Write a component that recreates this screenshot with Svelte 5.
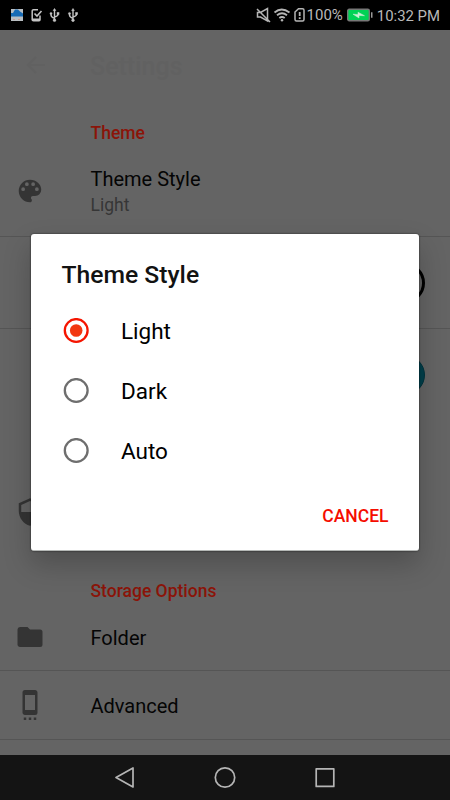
<script lang="ts">
  let options: string[] = ['Light', 'Dark', 'Auto'];
  let selected: string = $state('Light');
</script>

<div class="screen">
  <header class="status">
    <svg class="notifications" width="72" height="16" viewBox="0 0 72 16">
      <rect x="0" y="2" width="12" height="12" fill="#b9bec2" />
      <path d="M0 9.500V6h2l2-3.500h3l2 2 3 2v3z" fill="#176bb5" />
      <path d="M2 12.500h2m3 0h2" stroke="#c99a8d" />
      <path d="M27 2.700h-4.500q-1.300 0-1.300 1v9q0 1 1.300 1h5.500q1 0 1-1V8.500" fill="none" stroke="#c4c4c4" stroke-width="1.500" />
      <path d="M21 12.500h8" stroke="#c4c4c4" stroke-width="2" />
      <path d="m23.500 6.500 2.500 2.500 4.500-5" fill="none" stroke="#c4c4c4" stroke-width="1.600" />
      {#each [43.5, 62] as x}
        <g transform="translate({x} 0)" fill="#c4c4c4" stroke="#c4c4c4">
          <path d="M0 3v10M-3.500 6v2q0 2 3.500 3.300M3.500 6v1.500q0 1.500-3.500 2.500" fill="none" stroke-width="1.400" />
          <path d="m0 1.500 1.300 2h-2.600z" stroke-width=".6" />
          <circle cx="0" cy="13.300" r="1.300" stroke-width=".6" />
          <circle cx="-3.500" cy="6.500" r="1.100" stroke-width=".4" />
          <path d="M2.300 5.200h2.500v2.500H2.300z" stroke="none" />
        </g>
      {/each}
    </svg>
    <div class="indicators">
      <svg width="50" height="16" viewBox="0 0 50 16" fill="none" stroke="#b5b5b5" stroke-width="1.500">
        <path d="M1.500 5.500h3L11.500 1.500v12.500l-7-4h-3zM1 2l13 13" />
        <path d="M18.500 5.500q7-6 15 0M21 8.300q5-4 10 0M23.300 11q2.700-2 5.400 0" stroke-width="1.800" />
        <circle cx="26" cy="13.300" r="1.200" fill="#b5b5b5" stroke="none" />
        <path d="M42.500 1.700h4q1.500 0 1.500 1.500v9.300q0 1.500-1.500 1.500h-6q-1.500 0-1.500-1.500V5z" />
        <path d="M43.700 5v4M43.700 10.300v1.700" stroke-width="1.800" />
      </svg>
      <span class="percent">100%</span>
      <svg class="battery" width="26" height="14" viewBox="0 0 26 14">
        <rect x=".7" y="1.200" width="21.600" height="11.600" rx="1.500" fill="#00d355" stroke="#777" stroke-width="1.400" />
        <path d="M24 4.200h1.500v5.600H24z" fill="#999" />
        <path d="m6 6.200 5 .3V4.200l6.500 3.500-5.500-.2v2.500z" fill="#c8eed4" stroke="#c8eed4" stroke-width=".5" />
      </svg>
      <span class="clock">10:32 PM</span>
    </div>
  </header>

  <main class="settings">
    <div class="toolbar">
      <svg class="back" width="20" height="18" viewBox="0 0 20 18">
        <path d="M19 9H2m8-8L2 9l8 8" fill="none" stroke="#616161" stroke-width="2" />
      </svg>
      <h1>Settings</h1>
    </div>
    <h2 class="theme-heading">Theme</h2>
    <div class="row theme-row">
      <svg class="icon" width="30" height="30" viewBox="0 0 24 24">
        <path d="M12 3a9 9 0 0 0 0 18c.83 0 1.500-.67 1.500-1.500 0-.39-.15-.74-.39-1.010-.23-.26-.38-.61-.38-.99 0-.83.67-1.500 1.500-1.500H16a5 5 0 0 0 5-5c0-4.420-4.030-8-9-8zm-5.500 9a1.500 1.500 0 1 1 0-3 1.500 1.500 0 0 1 0 3zm3-4a1.500 1.500 0 1 1 0-3 1.500 1.500 0 0 1 0 3zm5 0a1.500 1.500 0 1 1 0-3 1.500 1.500 0 0 1 0 3zm3 4a1.500 1.500 0 1 1 0-3 1.500 1.500 0 0 1 0 3z" />
      </svg>
      <div class="label">
        <div>Theme Style</div>
        <small>Light</small>
      </div>
    </div>
    <div class="row color-row"><span class="swatch outline"></span></div>
    <div class="row color-row plain"><span class="swatch accent"></span></div>
    <div class="row shield-row">
      <svg class="icon" width="30" height="30" viewBox="0 0 24 24">
        <path d="M12 1 3 5v6c0 5.550 3.840 10.740 9 12 5.160-1.260 9-6.450 9-12V5l-9-4zm0 2.200 7 3.100V12H5V6.300l7-3.100z" />
      </svg>
    </div>
    <h2 class="storage-heading">Storage Options</h2>
    <div class="row folder-row">
      <svg class="icon" width="30" height="30" viewBox="0 0 24 24">
        <path d="M10 4H4a2 2 0 0 0-1.990 2L2 18c0 1.100.9 2 2 2h16a2 2 0 0 0 2-2V8a2 2 0 0 0-2-2h-8l-2-2z" />
      </svg>
      <div class="label">Folder</div>
    </div>
    <div class="row advanced-row">
      <svg class="icon" width="30" height="30" viewBox="0 0 24 24">
        <path d="M7 22h2v2H7zM11 22h2v2h-2zM15 22h2v2h-2zM16 .01 8 0a2 2 0 0 0-2 2v16c0 1.100.9 2 2 2h8a2 2 0 0 0 2-2V2c0-1.100-.9-1.990-2-1.990zM16 16H8V4h8v12z" />
      </svg>
      <div class="label">Advanced</div>
    </div>
  </main>

  <nav>
    <svg width="22" height="24" viewBox="0 0 22 24"><path d="M19 2v19L2 11.500z" /></svg>
    <svg width="22" height="24" viewBox="0 0 22 24"><circle cx="11" cy="11.500" r="9.700" /></svg>
    <svg width="22" height="24" viewBox="0 0 22 24"><path d="M2.200 2.800h17.600v17.600H2.200z" /></svg>
  </nav>

  <div class="dialog" role="dialog" aria-label="Theme Style">
    <h3>Theme Style</h3>
    {#each options as option}
      <button class="option" onclick={() => (selected = option)}>
        <svg class="radio" class:checked={selected === option} width="26" height="26" viewBox="0 0 26 26">
          <circle class="ring" cx="13.200" cy="12.500" r="11.400" />
          {#if selected === option}
            <circle class="dot" cx="13.200" cy="12.500" r="6.300" />
          {/if}
        </svg>
        {option}
      </button>
    {/each}
    <button class="cancel">CANCEL</button>
  </div>
</div>

<style>
  :global(body) {
    margin: 0;
  }

  .screen {
    position: relative;
    display: flex;
    flex-direction: column;
    width: 450px;
    height: 800px;
    overflow: hidden;
    background: #646464;
    font-family: Roboto, "Liberation Sans", sans-serif;
  }

  .status {
    display: flex;
    justify-content: space-between;
    box-sizing: border-box;
    height: 30px;
    padding: 7px 10px 0 11px;
    background: #000;
    color: #b9b9b9;
  }

  .indicators {
    display: flex;
    align-items: flex-start;
  }

  .percent {
    margin-left: 1px;
    font-size: 15px;
    line-height: 16px;
  }

  .battery {
    margin: 1px 0 0 4px;
  }

  .clock {
    margin-left: 4px;
    font-size: 14.9px;
    line-height: 18px;
  }

  .settings {
    flex: 1;
  }

  .toolbar {
    display: flex;
    align-items: center;
    height: 73px;
    padding-left: 26px;
  }

  .back {
    margin-top: -3px;
  }

  h1 {
    margin: 0 0 0 44px;
    color: #616161;
    font-size: 25px;
    font-weight: 500;
  }

  h2 {
    margin: 0;
    padding-left: 90.5px;
    color: #8b1409;
    font-size: 17.5px;
    font-weight: 500;
  }

  .theme-heading {
    height: 41px;
    line-height: 60px;
  }

  .storage-heading {
    height: 59px;
    line-height: 78px;
  }

  .row {
    display: flex;
    align-items: center;
    box-sizing: border-box;
    padding: 0 25px 0 15px;
    border-bottom: 1px solid #555;
    color: #050505;
    font-size: 20px;
  }

  .icon {
    flex: none;
    fill: #343434;
  }

  .label {
    margin: 2px 0 0 45.5px;
    line-height: 26px;
  }

  small {
    display: block;
    color: #363636;
    font-size: 17.5px;
  }

  .theme-row {
    height: 93px;
    padding-top: 1px;
  }

  .theme-row .label {
    margin-top: 2px;
  }

  .color-row {
    justify-content: flex-end;
    height: 92px;
  }

  .plain, .shield-row {
    border-bottom: none;
  }

  .swatch {
    box-sizing: border-box;
    width: 40px;
    height: 40px;
    border-radius: 50%;
  }

  .outline {
    border: 3px solid #000;
  }

  .accent {
    background: #003f4b;
    border: 1px solid #00333d;
  }

  .shield-row {
    height: 131px;
    padding-top: 50px;
  }

  .folder-row {
    height: 60px;
    padding-bottom: 7px;
  }

  .advanced-row {
    height: 69px;
  }

  nav {
    display: flex;
    justify-content: space-between;
    align-items: center;
    height: 45px;
    padding: 0 114px;
    background: #141414;
  }

  nav svg {
    fill: none;
    stroke: #b5b5b5;
    stroke-width: 1.7;
    stroke-linejoin: round;
  }

  .dialog {
    position: absolute;
    top: 234px;
    left: 31px;
    display: flex;
    flex-direction: column;
    box-sizing: border-box;
    width: 388px;
    height: 317px;
    border-bottom: 1px solid #b5b8b6;
    border-radius: 3px;
    background: #fff;
    box-shadow: 0 0 2px rgba(0, 0, 0, 0.7), 0 13px 28px rgba(0, 0, 0, 0.22);
  }

  h3 {
    height: 66px;
    margin: 0 0 0 30.5px;
    color: #121212;
    font-size: 24.7px;
    font-weight: 500;
    line-height: 82px;
  }

  button {
    border: none;
    background: none;
    font-family: inherit;
    cursor: pointer;
  }

  .option {
    display: flex;
    align-items: center;
    height: 60px;
    padding: 2px 0 0 32px;
    color: #000;
    font-size: 22.5px;
  }

  .radio {
    margin: -1px 32px 0 0;
  }

  .ring {
    fill: none;
    stroke: #6e6e6e;
    stroke-width: 2.3;
  }

  .checked .ring {
    stroke: #f51500;
  }

  .dot {
    fill: #f23710;
  }

  .cancel {
    align-self: flex-end;
    height: 40px;
    margin: 16px 30.5px 0 0;
    padding: 0;
    color: #f50d00;
    font-size: 17.5px;
    font-weight: 500;
  }
</style>
